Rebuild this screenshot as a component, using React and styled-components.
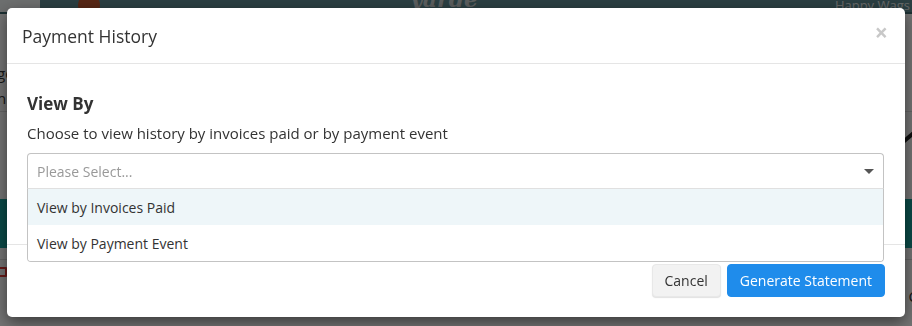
import React from "react";
import styled, { createGlobalStyle } from "styled-components";

const GlobalStyle = createGlobalStyle`
  html, body {
    margin: 0;
    padding: 0;
    width: 912px;
    height: 326px;
    overflow: hidden;
    font-family: "Open Sans", "Liberation Sans", sans-serif;
  }
  * { box-sizing: border-box; }
`;

/* ---- page behind the modal ---- */

const Page = styled.div`
  width: 912px;
  height: 326px;
  background: #fff;
  display: flex;
  flex-direction: column;
  overflow: hidden;
`;

const Header = styled.div`
  height: 14px;
  background: #5f8b92;
  border-bottom: 2px solid #3f6a70;
  display: flex;
  align-items: flex-end;
  flex-shrink: 0;
`;

const SearchBox = styled.div`
  width: 40px;
  height: 12px;
  background: #f0f3f4;
  margin-right: 38px;
`;

const Avatar = styled.div`
  width: 22px;
  height: 22px;
  border-radius: 50%;
  background: #c0552e;
  align-self: flex-start;
  margin-top: -6px;
`;

const Logo = styled.div`
  margin-left: 310px;
  color: #c9cfd0;
  font-family: "DejaVu Serif", serif;
  font-style: italic;
  font-weight: bold;
  font-size: 22px;
  line-height: 14px;
  align-self: flex-start;
  margin-top: -8px;
`;

const HeaderUser = styled.div`
  margin-left: auto;
  margin-right: 2px;
  color: #e2e6e7;
  font-size: 13px;
  line-height: 14px;
  align-self: flex-start;
  margin-top: -2px;
`;

const Rows = styled.div`
  display: flex;
  flex-direction: column;
`;

const Row = styled.div`
  height: ${(p) => p.h}px;
  display: flex;
  align-items: center;
  justify-content: space-between;
  color: #333;
  font-size: 15px;
  border-bottom: ${(p) => (p.line ? "1px solid #ddd" : "none")};
  background: ${(p) => (p.teal ? "#17a39e" : "transparent")};
`;

const Clip = styled.span`
  margin-left: -3px;
`;

const EditMark = styled.span`
  width: 10px;
  height: 10px;
  margin-left: -3px;
  border: 2px solid #e53935;
  border-radius: 1px;
`;

const Pen = styled.span`
  width: 14px;
  height: 4px;
  background: #222;
  transform: rotate(-40deg);
  margin-right: -4px;
`;

const RightText = styled.span`
  margin-right: -6px;
`;

const Backdrop = styled.div`
  position: fixed;
  inset: 0;
  background: rgba(0, 0, 0, 0.55);
`;

/* ---- modal ---- */

const Modal = styled.div`
  position: fixed;
  left: 7px;
  top: 8px;
  width: 898px;
  background: #fff;
  border-radius: 5px;
  box-shadow: 0 5px 15px rgba(0, 0, 0, 0.5);
  display: flex;
  flex-direction: column;
`;

const ModalHeader = styled.div`
  height: 56px;
  padding: 0 17px 0 15px;
  border-bottom: 1px solid #e5e5e5;
  display: flex;
  align-items: center;
  justify-content: space-between;
`;

const Title = styled.h3`
  margin: 0;
  font-size: 17.5px;
  font-weight: 400;
  color: #333;
`;

const Close = styled.span`
  color: #c8c8c8;
  font-size: 23px;
  font-weight: 700;
  line-height: 1;
  margin-bottom: 6px;
`;

const Body = styled.div`
  height: 180px;
  padding: 28px 21px 0 20px;
`;

const SectionTitle = styled.h4`
  margin: 0;
  font-size: 17px;
  line-height: 24px;
  font-weight: 700;
  color: #333;
`;

const Hint = styled.p`
  margin: 7px 0 10px;
  font-size: 15px;
  line-height: 20px;
  color: #333;
`;

const SelectWrap = styled.div`
  position: relative;
`;

const SelectBox = styled.div`
  height: 36px;
  border: 1px solid #c3c3c3;
  border-radius: 4px 4px 0 0;
  border-bottom-color: #e0e0e0;
  padding: 0 9px 0 9px;
  display: flex;
  align-items: center;
  justify-content: space-between;
  font-size: 14px;
  color: #999;
`;

const Caret = styled.span`
  width: 0;
  height: 0;
  border-left: 5px solid transparent;
  border-right: 5px solid transparent;
  border-top: 5px solid #555;
`;

const Menu = styled.div`
  position: absolute;
  left: 0;
  right: 0;
  top: 36px;
  background: #fff;
  border: 1px solid #c3c3c3;
  border-top: none;
  border-radius: 0 0 4px 4px;
  overflow: hidden;
  z-index: 2;
`;

const Option = styled.div`
  height: 36px;
  padding-left: 9px;
  display: flex;
  align-items: center;
  font-size: 14px;
  color: #333;
  background: ${(p) => (p.active ? "#eef6f9" : "#fff")};
`;

const Footer = styled.div`
  border-top: 1px solid #e5e5e5;
  padding: 19px 20px 20px;
  display: flex;
  justify-content: flex-end;
  gap: 6px;
`;

const Button = styled.button`
  height: 33px;
  padding: 0 12px;
  border-radius: 4px;
  font-family: "Open Sans", "Liberation Sans", sans-serif;
  font-size: 14px;
  cursor: pointer;
  border: 1px solid ${(p) => (p.primary ? "#1f8ceb" : "#e8e8e8")};
  background: ${(p) => (p.primary ? "#1f8ceb" : "#f2f2f2")};
  color: ${(p) => (p.primary ? "#fff" : "#333")};
  box-shadow: ${(p) => (p.primary ? "none" : "0 1px 1px rgba(0,0,0,0.12)")};
`;

export default function App() {
  return (
    <>
      <GlobalStyle />
      <Page>
        <Header>
          <SearchBox />
          <Avatar />
          <Logo>yarde</Logo>
          <HeaderUser>Happy Wags</HeaderUser>
        </Header>
        <Rows>
          <Row h={48} />
          <Row h={22}>
            <Clip>ge</Clip>
          </Row>
          <Row h={28} line>
            <Clip>n</Clip>
          </Row>
          <Row h={50}>
            <span />
            <Pen />
          </Row>
          <Row h={37} />
          <Row h={49} teal />
          <Row h={12} line />
          <Row h={24}>
            <EditMark />
          </Row>
          <Row h={24}>
            <span />
            <RightText>C</RightText>
          </Row>
        </Rows>
      </Page>
      <Backdrop />
      <Modal>
        <ModalHeader>
          <Title>Payment History</Title>
          <Close>×</Close>
        </ModalHeader>
        <Body>
          <SectionTitle>View By</SectionTitle>
          <Hint>Choose to view history by invoices paid or by payment event</Hint>
          <SelectWrap>
            <SelectBox>
              <span>Please Select...</span>
              <Caret />
            </SelectBox>
            <Menu>
              <Option active>View by Invoices Paid</Option>
              <Option>View by Payment Event</Option>
            </Menu>
          </SelectWrap>
        </Body>
        <Footer>
          <Button>Cancel</Button>
          <Button primary>Generate Statement</Button>
        </Footer>
      </Modal>
    </>
  );
}
